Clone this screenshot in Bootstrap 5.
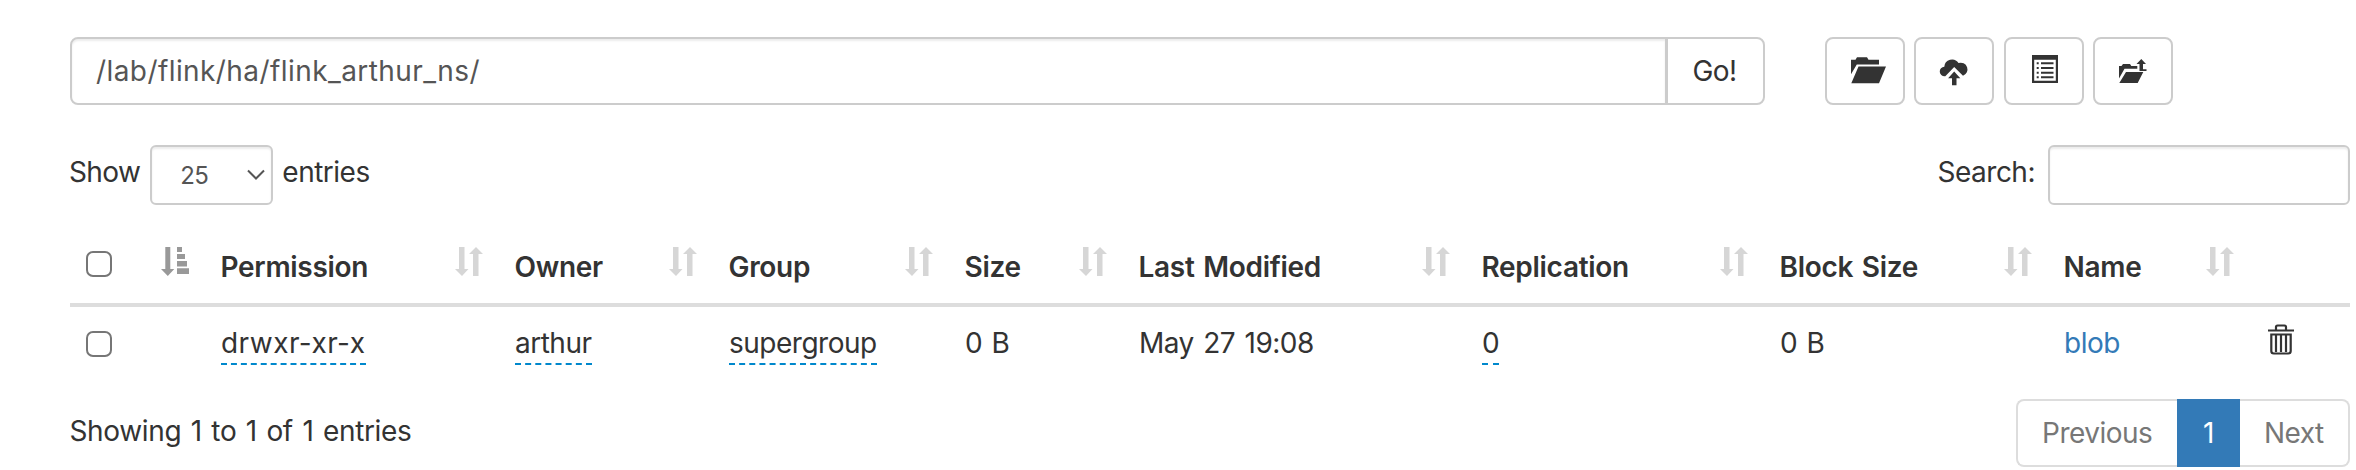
<!DOCTYPE html>
<html lang="en">
<head>
<meta charset="utf-8">
<title>Browse Directory</title>
<link href="https://cdn.jsdelivr.net/npm/bootstrap@5.3.0/dist/css/bootstrap.min.css" rel="stylesheet">
<style>
body{font-family:Inter,"Liberation Sans",sans-serif;font-size:28px;line-height:40px;color:#333;background:#fff;letter-spacing:-.5px;word-spacing:2px;overflow:hidden}
.page{padding:37px 6px 0 70px}
.form-control,.form-select,.btn,.page-link{font-size:28px;line-height:40px;letter-spacing:inherit}
.form-control,.form-select{border:2px solid #ccc;color:#555;box-shadow:inset 0 2px 2px rgba(0,0,0,.075);border-radius:6px}
.path-group{width:1695px;height:68px}
.path-group .form-control{padding:0 24px;border-radius:8px 0 0 8px;letter-spacing:.42px}
.btn-line{border:2px solid #ccc;border-radius:8px;color:#333;background:#fff}
.path-group .btn-line{width:99px;padding:0 2px 0 0;border-radius:0 8px 8px 0}
.tools{gap:9.33px;margin-left:60px}
.tools .btn-line{width:80px;height:68px;padding:0}
.tools svg{display:block;fill:#333}
.filters{height:60px;margin-top:40px}
.filters label{padding-bottom:6px}
.entries-label{margin-left:-1px;letter-spacing:-.6px}
.form-select{width:123px;height:60px;margin:0 9px 0 10px;padding:2px 0 0 28px;font-size:24px;background-image:none;letter-spacing:-.7px;appearance:none}
.select-box{position:relative}
.select-box svg{position:absolute;right:17px;top:24px;pointer-events:none}
.search-box{width:302px;height:60px;margin-left:13px}
.files{table-layout:fixed;width:2280px;margin:16px 0 0;border-collapse:separate;border-spacing:0;color:#333}
.files th{padding:26px 16px 16px;border-bottom:4px solid #ddd;font-weight:600;color:#333;white-space:nowrap;vertical-align:top!important;letter-spacing:-.3px}
.files th span{margin-left:-.5px}
.files td{padding:16px;border:0;color:#333;height:72px;white-space:nowrap}
.files svg{display:block;flex:none}
.form-check-input{width:26px;height:26px;border:2px solid #767676;border-radius:5px;margin:4px 0 0;display:block;float:none}
td .form-check-input{margin-top:8px}
.edit{border-bottom:2px dashed #08c;padding-bottom:3px}
.mode{letter-spacing:.45px}
.files a{color:#337ab7}
.footer-row{margin-top:20px}
.info{padding-top:12px;letter-spacing:-.35px;margin-left:-.5px}
.page-link{height:68px;padding:12px 24px;border:2px solid #ddd;color:#777;margin:0!important}
.page-item:first-child .page-link{width:161px;border-radius:8px 0 0 8px;border-right:0;padding-right:0;padding-left:24px}
.page-item:last-child .page-link{width:110px;border-radius:0 8px 8px 0;border-left:0;padding-right:0}
.page-item.active .page-link{width:63px;padding:12px 0;text-align:center;background:#337ab7;border-color:#337ab7;color:#fff}
</style>
</head>
<body>
<svg width="0" height="0" class="d-none">
  <symbol id="sort" viewBox="0 0 28 29"><path fill="#d6d6d6" d="M4 0h5.500v22H13.500l-6.500 7-7-7h4zM18 29h5.500V7H28l-7-7-7 7h4z"/></symbol>
  <symbol id="sorted" viewBox="0 0 28 29"><path fill="#999" d="M4.300 0h5v22h4l-6.500 7L0 22h4.300zM16 0h5v5h-5zM16 7h8v5h-8zM16 14h10v5.500H16zM16 21.300h12V27H16z"/></symbol>
</svg>
<div class="page">
  <div class="d-flex">
    <div class="input-group flex-nowrap path-group">
      <input class="form-control" type="text" value="/lab/flink/ha/flink_arthur_ns/">
      <button class="btn btn-line" type="button">Go!</button>
    </div>
    <div class="d-flex tools">
      <button class="btn btn-line" aria-label="Create directory"><svg width="76" height="64"><path transform="translate(24 18.300)" d="M0 2.500h4.500L6 0h10l1.500 2.500H28V7.300H5.800L0 17zM7.500 9.300H35L28 26H.3z"/></svg></button>
      <button class="btn btn-line" aria-label="Upload files"><svg width="76" height="64"><g transform="translate(24 18.300)"><path d="M4.700 19A4.700 4.700 0 0 1 4.300 9.500 7.700 7.700 0 0 1 18.500 5.800 6.700 6.700 0 1 1 23 18.500L14.200 9.800 5.300 19z"/><path d="M14.200 14.300 20.300 21H16.500v7h-4.500v-7H8.100z"/></g></svg></button>
      <button class="btn btn-line" aria-label="Cut and paste"><svg width="76" height="64"><g transform="translate(26 16)"><path fill-rule="evenodd" d="M0 0h26v28H0zM2.200 4.700v21h21.600v-21z"/><path d="M4.700 7.300h2v2h-2zM9 7.300h12.500v2H9zM4.700 12h2v2h-2zM9 12h12.500v2H9zM4.700 16.700h2v2h-2zM9 16.700h12.500v2H9zM4.700 21.300h2v2h-2zM9 21.300h12.500v2H9z"/></g></svg></button>
      <button class="btn btn-line" aria-label="Parent directory"><svg width="76" height="64"><path transform="translate(24 20)" d="M0 7h2.500L4 5h7l1.300 2h6v2.800H5.500L0 19.500zM7 13h17.300l-5.600 11H.3zM22.300 0 27 5h-3v5.300h3.500V12h-7V5h-3z"/></svg></button>
    </div>
  </div>

  <div class="d-flex justify-content-between filters">
    <div class="d-flex align-items-center">
      <label class="entries-label">Show</label>
      <div class="select-box"><select class="form-select"><option>25</option></select>
        <svg width="18" height="12" fill="none" stroke="#555" stroke-width="2"><path d="m1 1.500 8 8 8-8"/></svg></div>
      <label>entries</label>
    </div>
    <div class="d-flex align-items-center">
      <label>Search:</label><input class="form-control search-box" type="text">
    </div>
  </div>

  <table class="table files">
    <colgroup><col style="width:135px"><col style="width:294px"><col style="width:214px"><col style="width:236px"><col style="width:174px"><col style="width:343px"><col style="width:298px"><col style="width:284px"><col style="width:202px"><col style="width:100px"></colgroup>
    <thead><tr>
      <th><div class="d-flex justify-content-between"><input class="form-check-input" type="checkbox"><svg width="28" height="29"><use href="#sorted"/></svg></div></th>
      <th><div class="d-flex justify-content-between"><span>Permission</span><svg width="28" height="29"><use href="#sort"/></svg></div></th>
      <th><div class="d-flex justify-content-between"><span>Owner</span><svg width="28" height="29"><use href="#sort"/></svg></div></th>
      <th><div class="d-flex justify-content-between"><span>Group</span><svg width="28" height="29"><use href="#sort"/></svg></div></th>
      <th><div class="d-flex justify-content-between"><span>Size</span><svg width="28" height="29"><use href="#sort"/></svg></div></th>
      <th><div class="d-flex justify-content-between"><span>Last Modified</span><svg width="28" height="29"><use href="#sort"/></svg></div></th>
      <th><div class="d-flex justify-content-between"><span>Replication</span><svg width="28" height="29"><use href="#sort"/></svg></div></th>
      <th><div class="d-flex justify-content-between"><span>Block Size</span><svg width="28" height="29"><use href="#sort"/></svg></div></th>
      <th><div class="d-flex justify-content-between"><span>Name</span><svg width="28" height="29"><use href="#sort"/></svg></div></th>
      <th></th>
    </tr></thead>
    <tbody><tr>
      <td><input class="form-check-input" type="checkbox"></td>
      <td><span class="edit mode">drwxr-xr-x</span></td>
      <td><span class="edit">arthur</span></td>
      <td><span class="edit">supergroup</span></td>
      <td>0 B</td>
      <td>May 27 19:08</td>
      <td><span class="edit">0</span></td>
      <td>0 B</td>
      <td><a href="#" class="text-decoration-none">blob</a></td>
      <td><svg width="28" height="32" viewBox="-2 -1 28 32" fill="none" stroke="#333" stroke-width="2.200"><path d="M0 6.500h26M8 6V3q0-1.500 1.500-1.500h7Q18 1.500 18 3v3M3.300 10.500h19.400V27q0 2.500-2.500 2.500H5.800Q3.300 29.500 3.300 27zM8 11v17M13 11v17M18 11v17"/></svg></td>
    </tr></tbody>
  </table>

  <div class="d-flex justify-content-between footer-row">
    <div class="info">Showing 1 to 1 of 1 entries</div>
    <ul class="pagination mb-0">
      <li class="page-item"><a class="page-link" href="#">Previous</a></li>
      <li class="page-item active"><a class="page-link" href="#">1</a></li>
      <li class="page-item"><a class="page-link" href="#">Next</a></li>
    </ul>
  </div>
</div>
<script src="https://cdn.jsdelivr.net/npm/bootstrap@5.3.0/dist/js/bootstrap.bundle.min.js"></script>
</body>
</html>
